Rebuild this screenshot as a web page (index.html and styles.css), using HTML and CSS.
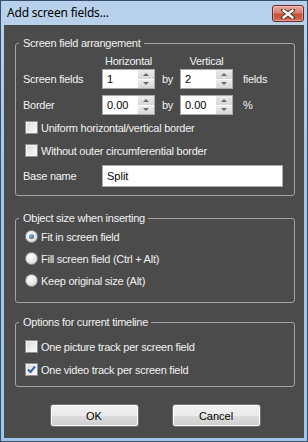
FILE: index.html
```html
<!DOCTYPE html>
<html lang="en">

<head>
    <meta charset="UTF-8">
    <title>Add screen fields...</title>
    <link rel="stylesheet" href="styles.css">
</head>

<body>
    <div class="window">
        <div class="titlebar">
            <span class="title">Add screen fields...</span>
            <button type="button" class="close">
                <svg width="14" height="10" viewBox="0 0 14 10">
                    <path d="M2 1 L12 9 M12 1 L2 9" stroke="#4a2a26" stroke-width="4.2" stroke-linecap="square" />
                    <path d="M2.5 1.5 L11.5 8.5 M11.5 1.5 L2.5 8.5" stroke="#ffffff" stroke-width="2.4" stroke-linecap="square" />
                </svg>
            </button>
        </div>

        <div class="client">
            <fieldset class="group group-arrangement">
                <legend>Screen field arrangement</legend>

                <div class="field-grid">
                    <span></span>
                    <span class="head">Horizontal</span>
                    <span></span>
                    <span class="head">Vertical</span>
                    <span></span>

                    <span class="label">Screen fields</span>
                    <div class="spin">
                        <input type="text" value="1">
                        <span class="spin-btns"><span class="up"></span><span class="down"></span></span>
                    </div>
                    <span class="by">by</span>
                    <div class="spin">
                        <input type="text" value="2">
                        <span class="spin-btns"><span class="up"></span><span class="down"></span></span>
                    </div>
                    <span class="unit">fields</span>

                    <span class="label">Border</span>
                    <div class="spin">
                        <input type="text" value="0.00">
                        <span class="spin-btns"><span class="up"></span><span class="down"></span></span>
                    </div>
                    <span class="by">by</span>
                    <div class="spin">
                        <input type="text" value="0.00">
                        <span class="spin-btns"><span class="up"></span><span class="down"></span></span>
                    </div>
                    <span class="unit">%</span>
                </div>

                <label class="check"><span class="box"></span>Uniform horizontal/vertical border</label>
                <label class="check"><span class="box"></span>Without outer circumferential border</label>

                <div class="base-row">
                    <span class="label">Base name</span>
                    <input type="text" class="text-input" value="Split">
                </div>
            </fieldset>

            <fieldset class="group group-size">
                <legend>Object size when inserting</legend>
                <label class="radio"><span class="dot checked"></span>Fit in screen field</label>
                <label class="radio"><span class="dot"></span>Fill screen field (Ctrl + Alt)</label>
                <label class="radio"><span class="dot"></span>Keep original size (Alt)</label>
            </fieldset>

            <fieldset class="group group-timeline">
                <legend>Options for current timeline</legend>
                <label class="check"><span class="box"></span>One picture track per screen field</label>
                <label class="check"><span class="box checked">
                        <svg width="9" height="9" viewBox="0 0 9 9">
                            <path d="M1 4.5 L3.5 7 L8 1.5" fill="none" stroke="#3b5f9a" stroke-width="2" />
                        </svg>
                    </span>One video track per screen field</label>
            </fieldset>

            <div class="actions">
                <button type="button" class="btn">OK</button>
                <button type="button" class="btn">Cancel</button>
            </div>
        </div>
    </div>
</body>

</html>
```

FILE: styles.css
```css
body {
    margin: 0;
    font-family: "Liberation Sans", Arial, sans-serif;
    font-size: 11px;
    letter-spacing: -0.25px;
}

.window {
    width: 308px;
    height: 442px;
    box-sizing: border-box;
    border: 1px solid #35506f;
    background: linear-gradient(#b9d2ec, #a7c6e6 40%, #9fc6ea);
    padding: 0 3px 3px;
    display: flex;
    flex-direction: column;
}

.titlebar {
    height: 24px;
    display: flex;
    justify-content: space-between;
    align-items: flex-start;
    padding-left: 3px;
    flex-shrink: 0;
}

.title {
    font-family: "Noto Sans", sans-serif;
    font-size: 12px;
    letter-spacing: -0.2px;
    line-height: 24px;
    color: #000;
}

.close {
    margin-top: 4px;
    width: 32px;
    height: 17px;
    padding: 0;
    border: 1px solid #6b2a22;
    border-radius: 3px;
    background: linear-gradient(#e9a99a, #d9806d 45%, #c4513d 55%, #cf6d55);
    box-shadow: inset 0 0 0 1px rgba(255, 255, 255, 0.35);
    display: flex;
    align-items: center;
    justify-content: center;
}

.client {
    flex: 1;
    background: #4b4b4b;
    color: #f2f2f2;
    padding: 12px 9px 0 11px;
}

.group {
    margin: 0;
    padding: 0 7px;
    border: 1px solid #a3a3a3;
    border-radius: 3px;
    min-width: 0;
    display: flex;
    flex-direction: column;
}

.group legend {
    padding: 0 3px 0 4px;
    margin-left: -4px;
    line-height: 13px;
}

.group-arrangement {
    gap: 6px;
    padding-top: 0;
    padding-bottom: 8px;
}

.group-size {
    margin-top: 16px;
    gap: 5px;
    padding-top: 3px;
    padding-bottom: 13px;
}

.group-timeline {
    margin-top: 13px;
    gap: 6px;
    padding-top: 9px;
    padding-bottom: 8px;
}

.field-grid {
    display: grid;
    grid-template-columns: 79px 53px 25px 53px auto;
    grid-template-rows: 15px 20px 20px;
    row-gap: 6px;
    align-items: center;
    margin: -2px 0 -2px;
}

.field-grid .head {
    text-align: center;
    align-self: end;
    line-height: 13px;
    margin-bottom: -5px;
}

.by {
    padding-left: 7px;
}

.unit {
    padding-left: 10px;
}

.spin {
    display: flex;
    height: 20px;
    box-sizing: border-box;
    border: 1px solid #a9a9a9;
    background: #fff;
}

.spin input {
    width: 0;
    flex: 1;
    border: none;
    padding: 0 0 0 4px;
    font: inherit;
    color: #000;
    outline: none;
}

.spin-btns {
    width: 16px;
    display: flex;
    flex-direction: column;
    gap: 1px;
    background: #fff;
}

.spin-btns span {
    flex: 1;
    display: flex;
    align-items: center;
    justify-content: center;
    background: linear-gradient(#ececec, #d6d6d6);
}

.spin-btns span::after {
    content: "";
    border-left: 3px solid transparent;
    border-right: 3px solid transparent;
}

.spin-btns .up::after {
    border-bottom: 3px solid #6a6a6a;
}

.spin-btns .down::after {
    border-top: 3px solid #6a6a6a;
}

.check,
.radio {
    display: flex;
    align-items: center;
    gap: 3px;
    height: 17px;
    padding-left: 2px;
}

.box {
    width: 13px;
    height: 13px;
    box-sizing: border-box;
    border: 1px solid #8e8f8f;
    background: linear-gradient(135deg, #dcdcdc, #fafafa);
    box-shadow: inset 0 0 0 1px #f4f4f4;
    display: flex;
    align-items: center;
    justify-content: center;
}

.dot {
    width: 13px;
    height: 13px;
    box-sizing: border-box;
    border: 1px solid #8e8f8f;
    border-radius: 50%;
    background: radial-gradient(circle at 40% 35%, #ffffff, #d2d2d2);
    display: flex;
    align-items: center;
    justify-content: center;
}

.dot.checked::after {
    content: "";
    width: 5px;
    height: 5px;
    border-radius: 50%;
    background: radial-gradient(circle at 40% 35%, #8fb6e0, #1f4f8a);
}

.base-row {
    display: flex;
    align-items: center;
}

.base-row .label {
    width: 79px;
}

.text-input {
    width: 181px;
    height: 22px;
    box-sizing: border-box;
    border: 1px solid #a9a9a9;
    padding: 0 0 0 4px;
    font: inherit;
    color: #000;
}

.actions {
    display: flex;
    justify-content: center;
    gap: 33px;
    margin-top: 17px;
}

.btn {
    width: 89px;
    height: 23px;
    border: 1px solid #707070;
    border-radius: 3px;
    background: linear-gradient(#f2f2f2, #ebebeb 50%, #dddddd 51%, #cfcfcf);
    box-shadow: inset 0 0 0 1px #fcfcfc;
    font: inherit;
    color: #000;
}
```
